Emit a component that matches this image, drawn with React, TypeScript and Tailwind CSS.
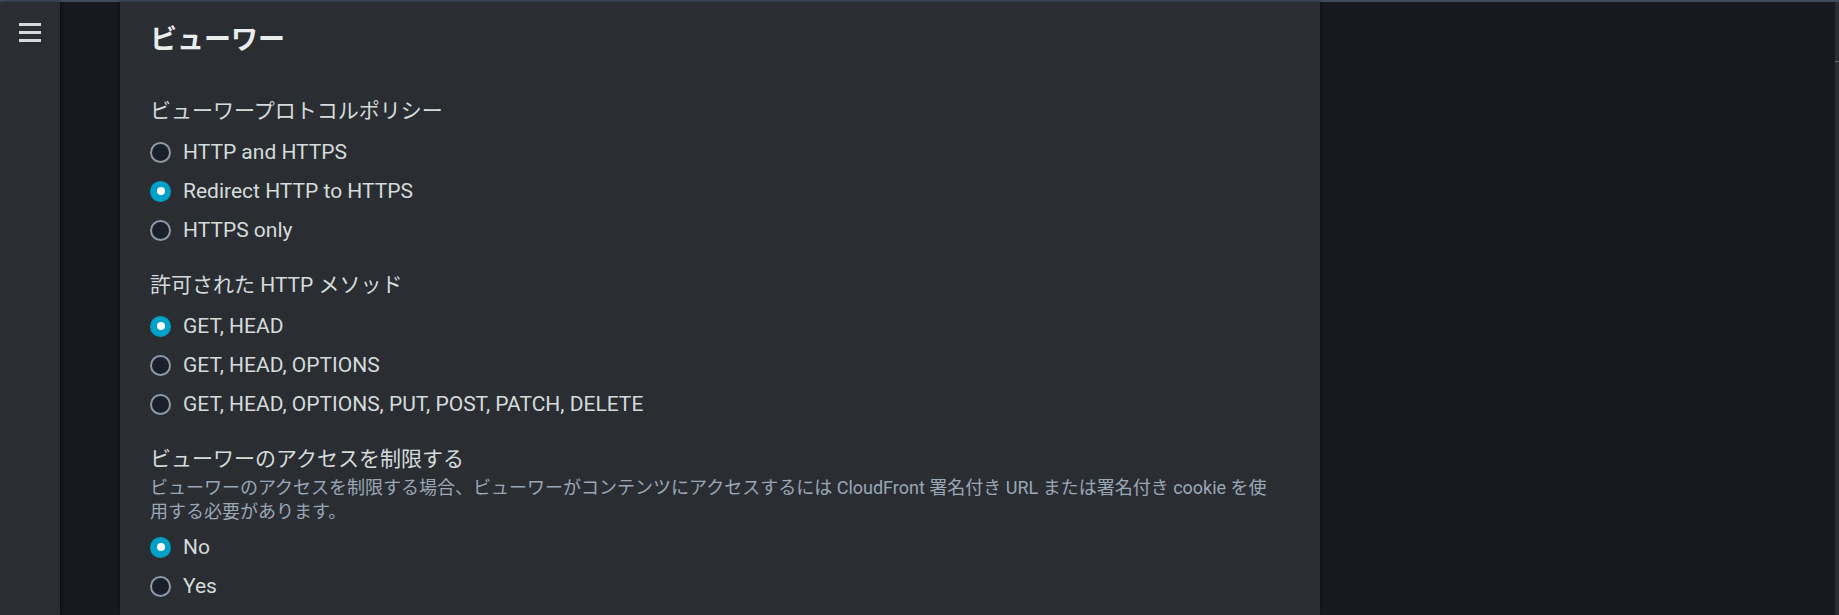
import React from 'react';

type Option = { label: string; checked?: boolean };

const Radio: React.FC<{ checked?: boolean }> = ({ checked }) =>
  checked ? (
    <span className="w-[21px] h-[21px] rounded-full bg-[#00a1c9] flex items-center justify-center shrink-0">
      <span className="w-[8px] h-[8px] rounded-full bg-white" />
    </span>
  ) : (
    <span className="w-[21px] h-[21px] rounded-full border-2 border-[#8d99a8] bg-[#1a2029] shrink-0" />
  );

const Field: React.FC<{ label: string; description?: React.ReactNode; options: Option[] }> = ({
  label,
  description,
  options,
}) => (
  <div className="flex flex-col">
    <div className="text-[21px] leading-[28px] text-[#d5dbdb]">{label}</div>
    {description && (
      <div className="mt-[3px] mb-[-4px] text-[18px] leading-[24px] text-[#9ba7b6]">{description}</div>
    )}
    <div className="flex flex-col gap-[11px] mt-[13px]">
      {options.map((opt) => (
        <label key={opt.label} className="flex items-center gap-[12px] h-[28px]">
          <Radio checked={opt.checked} />
          <span className="text-[21px] leading-[28px] text-[#d5dbdb]">{opt.label}</span>
        </label>
      ))}
    </div>
  </div>
);

const App: React.FC = () => {
  return (
    <div
      className="w-[1839px] h-[615px] overflow-hidden bg-[#16191f] flex flex-col"
      style={{ fontFamily: 'Roboto, "Noto Sans CJK JP", sans-serif' }}
    >
      <div className="h-[2px] bg-[#414d5c] shrink-0" />
      <div className="flex flex-1 min-h-0">
        {/* side navigation rail */}
        <aside className="w-[60px] bg-[#2a2e33] shrink-0 flex justify-center pt-[21px] shadow-[1px_0_3px_rgba(0,0,0,0.6)] z-10">
          <svg width="22" height="19" viewBox="0 0 22 19">
            <rect x="0" y="0" width="22" height="3" fill="#d5dbdb" />
            <rect x="0" y="8" width="22" height="3" fill="#d5dbdb" />
            <rect x="0" y="16" width="22" height="3" fill="#d5dbdb" />
          </svg>
        </aside>

        <div className="w-[60px] shrink-0" />

        {/* viewer settings panel */}
        <section className="w-[1200px] shrink-0 bg-[#2a2e33] px-[30px] pt-[22px] shadow-[0_0_3px_rgba(0,0,0,0.6)]">
          <h2 className="text-[27px] leading-[32px] font-bold text-[#eaeded]">ビューワー</h2>

          <div className="flex flex-col gap-[27px] mt-[41px]">
            <Field
              label="ビューワープロトコルポリシー"
              options={[
                { label: 'HTTP and HTTPS' },
                { label: 'Redirect HTTP to HTTPS', checked: true },
                { label: 'HTTPS only' },
              ]}
            />
            <Field
              label="許可された HTTP メソッド"
              options={[
                { label: 'GET, HEAD', checked: true },
                { label: 'GET, HEAD, OPTIONS' },
                { label: 'GET, HEAD, OPTIONS, PUT, POST, PATCH, DELETE' },
              ]}
            />
            <Field
              label="ビューワーのアクセスを制限する"
              description={
                <>
                  ビューワーのアクセスを制限する場合、ビューワーがコンテンツにアクセスするには CloudFront 署名付き URL または署名付き cookie を使
                  <br />
                  用する必要があります。
                </>
              }
              options={[{ label: 'No', checked: true }, { label: 'Yes' }]}
            />
          </div>
        </section>

        <div className="flex-1" />

        {/* scrollbar */}
        <div className="w-[4px] shrink-0 bg-[#2a2e33] flex flex-col">
          <div className="h-[60px] border-b border-[#5f6b7a]" />
        </div>
      </div>
    </div>
  );
};

export default App;
